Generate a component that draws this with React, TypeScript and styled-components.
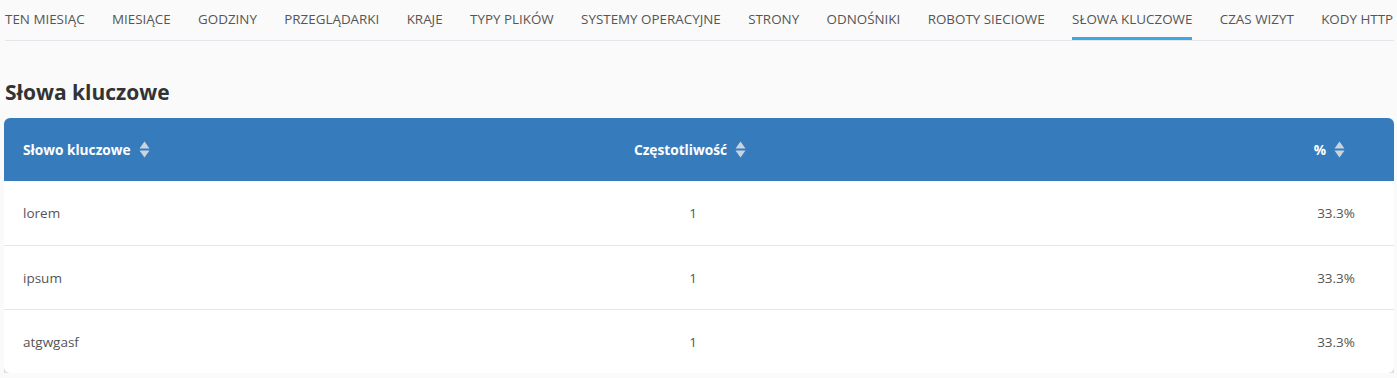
import React from 'react'
import styled, { createGlobalStyle } from 'styled-components'

const tabs = [
  'Ten miesiąc',
  'Miesiące',
  'Godziny',
  'Przeglądarki',
  'Kraje',
  'Typy plików',
  'Systemy operacyjne',
  'Strony',
  'Odnośniki',
  'Roboty sieciowe',
  'Słowa kluczowe',
  'Czas wizyt',
  'Kody HTTP',
]

const rows = [
  { word: 'lorem', count: 1, pct: '33.3%' },
  { word: 'ipsum', count: 1, pct: '33.3%' },
  { word: 'atgwgasf', count: 1, pct: '33.3%' },
]

function SortIcon() {
  return (
    <SortSvg width="11" height="17" viewBox="0 0 11 17">
      <path d="M5.5 0.5 L10.5 7.5 L0.5 7.5 Z" fill="#c9d4df" />
      <path d="M5.5 16.5 L10.5 9.5 L0.5 9.5 Z" fill="#c9d4df" />
    </SortSvg>
  )
}

function App() {
  const active = 'Słowa kluczowe'
  return (
    <Page>
      <GlobalStyle />
      <TabBar>
        {tabs.map(t => (
          <Tab key={t} active={t === active}>{t}</Tab>
        ))}
      </TabBar>

      <Title>Słowa kluczowe</Title>

      <Card>
        <HeadRow>
          <HeadCell align="left">Słowo kluczowe <SortIcon /></HeadCell>
          <HeadCell align="center">Częstotliwość <SortIcon /></HeadCell>
          <HeadCell align="right">% <SortIcon /></HeadCell>
        </HeadRow>
        {rows.map(r => (
          <BodyRow key={r.word}>
            <Cell align="left">{r.word}</Cell>
            <Cell align="center">{r.count}</Cell>
            <Cell align="right">{r.pct}</Cell>
          </BodyRow>
        ))}
      </Card>
    </Page>
  )
}

export default App

const GlobalStyle = createGlobalStyle`
  body {
    margin: 0;
    background: #fafafa;
    font-family: "Open Sans", "Liberation Sans", sans-serif;
  }
`

const Page = styled.div`
  padding: 0 3px 0 4px;
`

const TabBar = styled.div`
  display: flex;
  gap: 27.4px;
  margin-left: 1px;
  height: 40px;
  border-bottom: 1px solid #e3e6ea;
`

const Tab = styled.div<{ active?: boolean }>`
  display: flex;
  align-items: center;
  height: 100%;
  box-sizing: border-box;
  padding-top: 1px;
  font-size: 13.4px;
  color: #555;
  text-transform: uppercase;
  white-space: nowrap;
  border-bottom: 3px solid ${p => (p.active ? '#3fa9dd' : 'transparent')};
  margin-bottom: -1px;
`

const Title = styled.h2`
  margin: 37px 0 12px 1px;
  font-size: 21px;
  font-weight: 700;
  color: #333;
  line-height: 28px;
`

const Card = styled.div`
  background: #fff;
  border-radius: 6px;
  overflow: hidden;
  box-shadow: 0 4px 0 #d9dee3;
`

const grid = `
  display: grid;
  grid-template-columns: 1fr 1fr 1fr;
  align-items: center;
`

const HeadRow = styled.div`
  ${grid}
  height: 63px;
  background: #367bbb;
`

const HeadCell = styled.div<{ align: 'left' | 'center' | 'right' }>`
  display: flex;
  align-items: center;
  gap: 8px;
  font-size: 13.7px;
  font-weight: 700;
  color: #fff;
  justify-content: ${p => (p.align === 'left' ? 'flex-start' : p.align === 'center' ? 'center' : 'flex-end')};
  padding-left: ${p => (p.align === 'left' ? '19px' : '0')};
  padding-right: ${p => (p.align === 'center' ? '18px' : p.align === 'right' ? '49px' : '0')};
`

const SortSvg = styled.svg`
  display: block;
`

const BodyRow = styled.div`
  ${grid}
  height: 64px;
  border-top: 1px solid #e7e7e7;
  box-sizing: border-box;
  &:nth-child(2) {
    border-top: none;
  }
`

const Cell = styled.div<{ align: 'left' | 'center' | 'right' }>`
  font-size: 13.5px;
  color: #555;
  text-align: ${p => p.align};
  padding-left: ${p => (p.align === 'left' ? '19px' : '0')};
  padding-right: ${p => (p.align === 'center' ? '12px' : p.align === 'right' ? '39px' : '0')};
`
